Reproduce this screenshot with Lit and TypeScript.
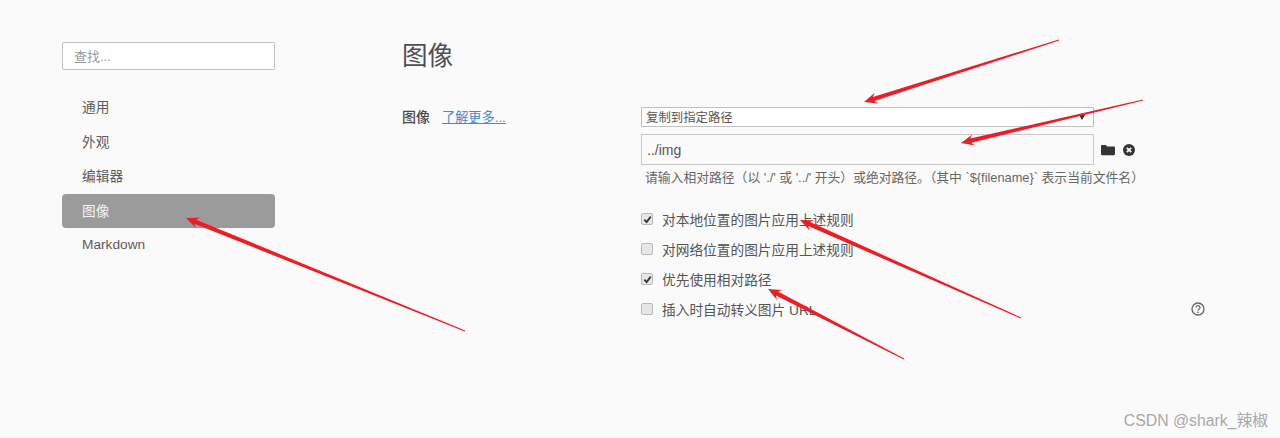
import { LitElement, html, css, svg } from "lit";
import { customElement } from "lit/decorators.js";

const arrows: [number, number, number, number][] = [
  [1059, 40, 864, 102],
  [1143, 100, 961, 143],
  [465, 331, 186, 218],
  [1021, 318, 800, 220],
  [904, 359, 768, 289],
];

function arrowPath(x1: number, y1: number, x2: number, y2: number) {
  const dx = x2 - x1, dy = y2 - y1;
  const len = Math.hypot(dx, dy);
  const ux = dx / len, uy = dy / len;
  const nx = -uy, ny = ux;
  const p = (along: number, side: number) =>
    `${(x2 - ux * along + nx * side).toFixed(1)} ${(y2 - uy * along + ny * side).toFixed(1)}`;
  return `M${p(len, 0.5)} L${p(10, 2.2)} L${p(13, 5.6)} L${x2} ${y2} L${p(13, -5.6)} L${p(10, -2.2)} L${p(len, -0.5)} Z`;
}

@customElement("app-root")
export class AppRoot extends LitElement {
  static styles = css`
    :host {
      display: block;
      position: relative;
      width: 1280px;
      height: 438px;
      overflow: hidden;
      background: #fafafa;
      color: #555;
      font-family: "Liberation Sans", "Noto Sans CJK SC", sans-serif;
    }
    .page { display: flex; height: 100%; box-sizing: border-box; padding-left: 62px; }
    .side { width: 213px; padding-top: 42px; flex: none; margin-right: 127px; }
    .search {
      height: 28px; box-sizing: border-box; border: 1px solid #c4c4c4; background: #fff;
      padding: 0 0 2px 11px; display: flex; align-items: center; font-size: 13px; color: #999;
      border-radius: 1px;
    }
    .nav { margin-top: 20px; display: flex; flex-direction: column; }
    .nav div {
      height: 34.6px; box-sizing: border-box; display: flex; align-items: center; padding: 0 0 2px 20px;
      font-size: 13.7px; color: #5c5c5c; border-radius: 4px;
    }
    .nav div.active { background: #9b9b9b; color: #f4f4f4; }
    .main { flex: 1; min-width: 0; }
    h1 {
      margin: 39px 0 0; font-size: 25.6px; line-height: 34px; font-weight: 400; color: #4f4f4f;
    }
    .row { display: flex; margin-top: 34px; }
    .label { width: 239px; flex: none; font-size: 14px; line-height: 20px; color: #4a4a4a; }
    .label a { margin-left: 12px; color: #428bca; text-decoration: underline; font-size: 13.2px; }
    .label b { font-weight: 500; }
    .fields { flex: 1; min-width: 0; }
    .select {
      width: 453px; height: 20px; box-sizing: border-box; border: 1px solid #c0c0c0; background: #fff;
      display: flex; align-items: center; justify-content: space-between;
      padding: 0 8px 0 4px; font-size: 12.4px; color: #555; border-radius: 1px;
    }
    .select svg { width: 6px; height: 5px; }
    .path { display: flex; align-items: center; margin-top: 7px; }
    .input {
      width: 453px; height: 31px; box-sizing: border-box; border: 1px solid #c8c8c8; background: #fafafa;
      display: flex; align-items: center; padding-left: 5px; font-size: 14px; color: #555;
    }
    .folder { margin-left: 7px; width: 14px; height: 12px; }
    .clear { margin-left: 8px; width: 12px; height: 12px; }
    .hint { margin: 4px 0 0 4px; font-size: 12.8px; line-height: 17px; color: #666; white-space: pre; }
    .checks { margin-top: 18px; display: flex; flex-direction: column; }
    .check { height: 30px; display: flex; align-items: center; font-size: 13.7px; color: #555; position: relative; width: 564px; }
    .box {
      width: 12px; height: 12px; box-sizing: border-box; border: 1px solid #b9b9b9; border-radius: 2px;
      background: #e6e6e6; margin-right: 9px; display: flex; align-items: center; justify-content: center; flex: none;
    }
    .box svg { width: 9px; height: 9px; }
    .spacer { flex: 1; }
    .help { width: 14px; height: 14px; }
    .arrows { position: absolute; inset: 0; width: 1280px; height: 438px; pointer-events: none; }
    .mark {
      position: absolute; right: 12px; bottom: 7px; font-size: 15.8px; line-height: 20px; color: #a8a8a8;
    }
  `;

  private checkRow(text: string, checked: boolean, help = false) {
    return html`<div class="check">
      <span class="box">${checked
        ? html`<svg viewBox="0 0 10 10"><path d="M1.5 5.2 4 7.800 8.600 1.800" fill="none" stroke="#333" stroke-width="2"/></svg>`
        : ""}</span>
      <span>${text}</span>
      ${help
        ? html`<span class="spacer"></span>
            <svg class="help" viewBox="0 0 14 14">
              <circle cx="7" cy="7" r="6" fill="none" stroke="#666" stroke-width="1.3"/>
              <path d="M5 5.600a2 2 0 1 1 3.200 1.600c-.8.500-1.200.900-1.200 1.600" fill="none" stroke="#666" stroke-width="1.2"/>
              <circle cx="7" cy="10.400" r=".8" fill="#666"/>
            </svg>`
        : ""}
    </div>`;
  }

  render() {
    return html`
      <div class="page">
        <aside class="side">
          <div class="search">查找...</div>
          <nav class="nav">
            <div>通用</div>
            <div>外观</div>
            <div>编辑器</div>
            <div class="active">图像</div>
            <div>Markdown</div>
          </nav>
        </aside>
        <main class="main">
          <h1>图像</h1>
          <div class="row">
            <div class="label"><b>图像</b><a href="#">了解更多...</a></div>
            <div class="fields">
              <div class="select">
                <span>复制到指定路径</span>
                <svg viewBox="0 0 6 5"><path d="M0 0h6L3 5z" fill="#333"/></svg>
              </div>
              <div class="path">
                <div class="input">../img</div>
                <svg class="folder" viewBox="0 0 14 12"><path d="M0 2.200C0 1.400.6 1 1.200 1h3.600l1.300 1.400h6.600c.7 0 1.300.5 1.300 1.200V10c0 .7-.6 1.200-1.300 1.200H1.200C.6 11.200 0 10.700 0 10z" fill="#333"/></svg>
                <svg class="clear" viewBox="0 0 12 12">
                  <circle cx="6" cy="6" r="6" fill="#333"/>
                  <path d="M3.800 3.800l4.400 4.400M8.200 3.800l-4.400 4.400" stroke="#fafafa" stroke-width="1.800"/>
                </svg>
              </div>
              <div class="hint">请输入相对路径（以 './' 或 '../' 开头）或绝对路径。（其中 \`\${filename}\` 表示当前文件名）</div>
              <div class="checks">
                ${this.checkRow("对本地位置的图片应用上述规则", true)}
                ${this.checkRow("对网络位置的图片应用上述规则", false)}
                ${this.checkRow("优先使用相对路径", true)}
                ${this.checkRow("插入时自动转义图片 URL", false, true)}
              </div>
            </div>
          </div>
        </main>
      </div>
      <svg class="arrows" viewBox="0 0 1280 438">
        ${arrows.map((a) => svg`<path d=${arrowPath(...a)} fill="#ee1c25"/>`)}
      </svg>
      <div class="mark">CSDN @shark_辣椒</div>
    `;
  }
}
